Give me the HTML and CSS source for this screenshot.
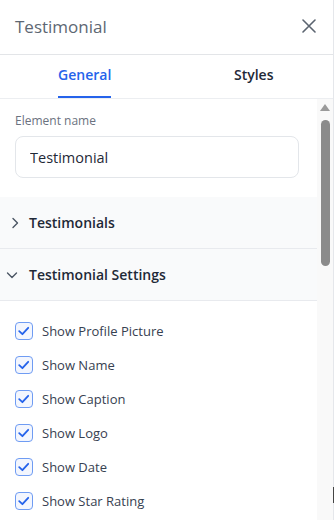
FILE: index.html
```html
<!DOCTYPE html>
<html lang="en">
<head>
  <meta charset="UTF-8" />
  <meta name="viewport" content="width=device-width, initial-scale=1.0" />
  <title>Testimonial</title>
  <link rel="stylesheet" href="styles.css">
</head>
<body>
  <aside class="panel">
    <header class="panel-header">
      <h2 class="panel-title">Testimonial</h2>
      <button class="close-btn" aria-label="Close">
        <svg width="14" height="14" viewBox="0 0 14 14"><path d="M1 1L13 13M13 1L1 13" stroke="#5b6470" stroke-width="1.6" stroke-linecap="round"/></svg>
      </button>
    </header>

    <nav class="tabs">
      <button class="tab active"><span>General</span></button>
      <button class="tab"><span>Styles</span></button>
    </nav>

    <div class="panel-body">
      <div class="content">
        <div class="field">
          <label class="field-label">Element name</label>
          <input class="field-input" type="text" value="Testimonial" />
        </div>

        <div class="accordion">
          <div class="acc-row">
            <svg class="chev" width="10" height="12" viewBox="0 0 10 12"><path d="M3 1.5L7.5 6L3 10.5" fill="none" stroke="#4b5563" stroke-width="1.4" stroke-linecap="round" stroke-linejoin="round"/></svg>
            <span>Testimonials</span>
          </div>
          <div class="acc-row open">
            <svg class="chev" width="12" height="10" viewBox="0 0 12 10"><path d="M1.5 3L6 7.5L10.5 3" fill="none" stroke="#4b5563" stroke-width="1.4" stroke-linecap="round" stroke-linejoin="round"/></svg>
            <span>Testimonial Settings</span>
          </div>
        </div>

        <ul class="checks">
          <li class="check-item"><span class="box"></span>Show Profile Picture</li>
          <li class="check-item"><span class="box"></span>Show Name</li>
          <li class="check-item"><span class="box"></span>Show Caption</li>
          <li class="check-item"><span class="box"></span>Show Logo</li>
          <li class="check-item"><span class="box"></span>Show Date</li>
          <li class="check-item"><span class="box"></span>Show Star Rating</li>
        </ul>
      </div>

      <div class="scrollbar">
        <span class="scroll-up"></span>
        <span class="scroll-thumb"></span>
      </div>
    </div>
  </aside>
  <span class="cursor-mark"></span>
</body>
</html>
```

FILE: styles.css
```css
* {
  box-sizing: border-box;
  margin: 0;
  padding: 0;
  font-family: 'Open Sans', 'Noto Sans', sans-serif;
}

body {
  background: #ffffff;
  width: 335px;
  height: 520px;
  overflow: hidden;
  position: relative;
}

.panel {
  width: 334px;
  height: 520px;
  border-right: 1px solid #e5e7eb;
  display: flex;
  flex-direction: column;
}

.panel-header {
  height: 55px;
  flex-shrink: 0;
  border-bottom: 1px solid #e3e5e8;
  display: flex;
  align-items: center;
  justify-content: space-between;
  padding: 0 17px 2px 15px;
}

.panel-title {
  font-size: 17px;
  font-weight: 400;
  color: #5d6773;
}

.close-btn {
  border: none;
  background: none;
  display: flex;
  cursor: pointer;
}

.tabs {
  height: 44px;
  flex-shrink: 0;
  display: grid;
  grid-template-columns: 1fr 1fr;
  border-bottom: 1px solid #eceef1;
}

.tab {
  border: none;
  background: none;
  font-size: 14px;
  font-weight: 600;
  color: #1f2937;
  display: flex;
  justify-content: center;
  cursor: pointer;
}

.tab span {
  display: flex;
  align-items: center;
  height: 100%;
  padding-bottom: 2px;
  border-bottom: 2px solid transparent;
}

.tab:first-child span {
  margin-left: 3px;
}

.tab:last-child span {
  margin-left: 8px;
}

.tab.active {
  color: #2563eb;
}

.tab.active span {
  border-bottom-color: #2563eb;
}

.panel-body {
  flex: 1;
  display: flex;
  overflow: hidden;
}

.content {
  flex: 1;
}

.field {
  padding: 13px 18px 19px 15px;
}

.field-label {
  display: block;
  font-size: 12px;
  color: #6b7280;
  margin-bottom: 7px;
}

.field-input {
  width: 100%;
  height: 42px;
  border: 1px solid #e3e6ea;
  border-radius: 8px;
  padding: 0 14px;
  font-size: 14.5px;
  color: #1f2937;
  outline: none;
}

.accordion {
  background: #f9fafb;
}

.acc-row {
  height: 52px;
  display: flex;
  align-items: center;
  gap: 9px;
  padding-left: 10px;
  border-bottom: 1px solid #e8eaee;
  font-size: 14px;
  font-weight: 600;
  color: #1f2937;
}

.acc-row.open {
  padding-left: 6px;
  gap: 11px;
}

.checks {
  list-style: none;
  padding: 21px 0 0 15px;
  display: flex;
  flex-direction: column;
  gap: 16px;
}

.check-item {
  display: flex;
  align-items: center;
  gap: 9px;
  height: 18px;
  font-size: 13px;
  color: #374151;
}

.box {
  width: 18px;
  height: 18px;
  border: 1.5px solid #6f9cf3;
  border-radius: 4px;
  background: #f3f6fe url("data:image/svg+xml,%3Csvg xmlns='http://www.w3.org/2000/svg' width='18' height='18' viewBox='0 0 18 18'%3E%3Cpath d='M4.2 9.2L7.4 12.2L13.2 5.8' fill='none' stroke='%232563eb' stroke-width='1.8' stroke-linecap='round' stroke-linejoin='round'/%3E%3C/svg%3E") center / 18px 18px no-repeat;
  flex-shrink: 0;
}

.scrollbar {
  width: 16px;
  flex-shrink: 0;
  background: #f9f9f9;
  display: flex;
  flex-direction: column;
  align-items: center;
  padding-top: 5px;
}

.scroll-up {
  width: 0;
  height: 0;
  border-left: 5px solid transparent;
  border-right: 5px solid transparent;
  border-bottom: 7px solid #9a9a9a;
}

.scroll-thumb {
  width: 9px;
  height: 146px;
  margin-top: 9px;
  background: #8b8b8b;
  border-radius: 5px;
}

.cursor-mark {
  position: absolute;
  left: 333px;
  top: 487px;
  width: 1px;
  height: 16px;
  background: #444;
}
```
